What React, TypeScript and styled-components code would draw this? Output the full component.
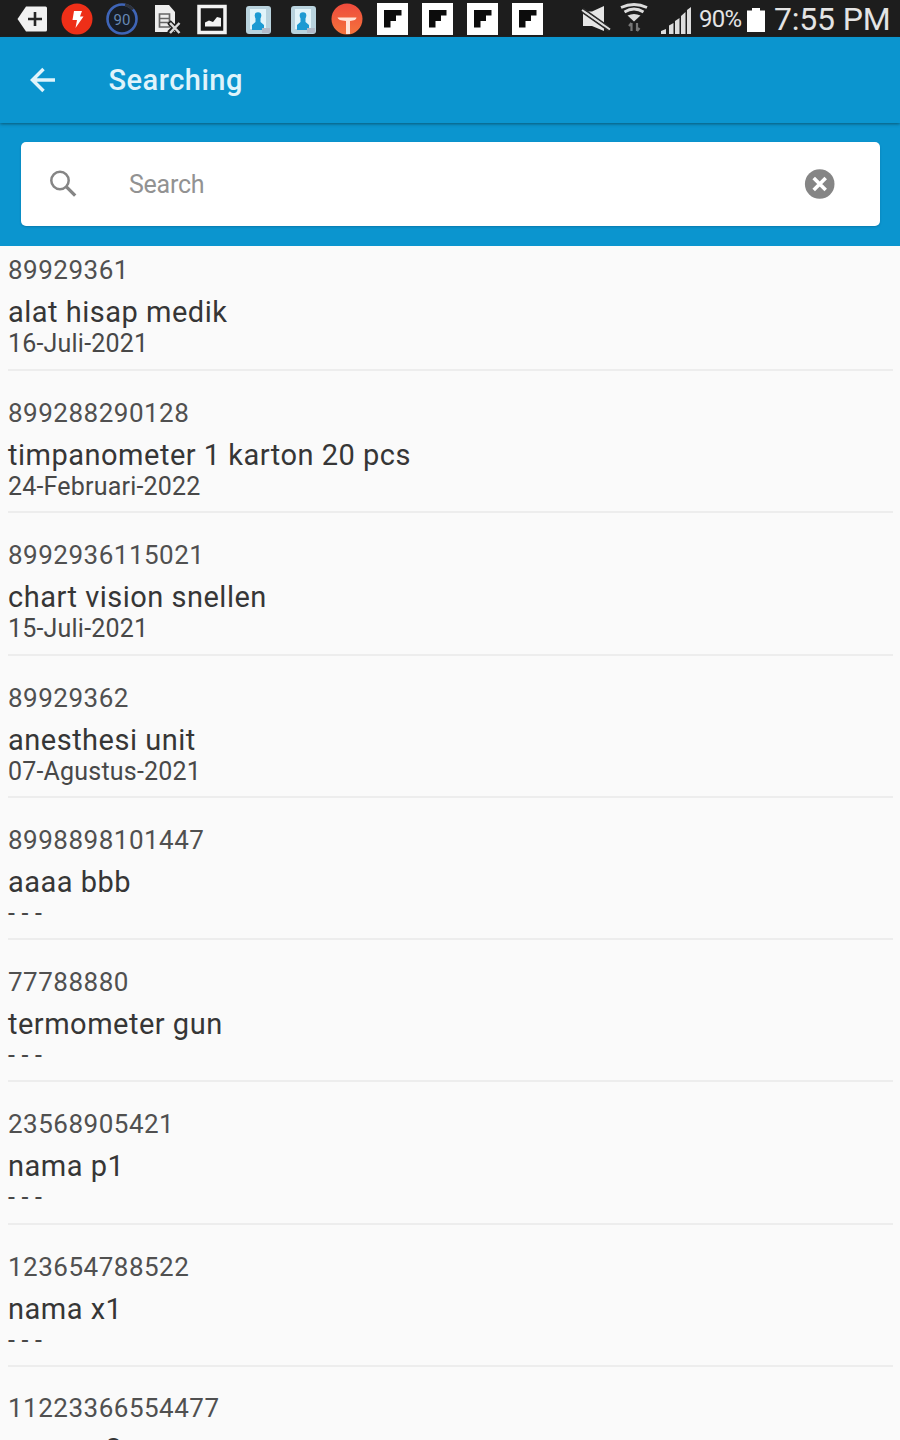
import React from "react";
import styled, { createGlobalStyle } from "styled-components";

const Global = createGlobalStyle`
  html, body { margin: 0; padding: 0; }
  body { background: #fafafa; font-family: Roboto, "Noto Sans", sans-serif; }
`;

const Screen = styled.div`
  width: 900px;
  height: 1440px;
  overflow: hidden;
  display: flex;
  flex-direction: column;
  background: #fafafa;
`;

const StatusBar = styled.div`
  flex: none;
  height: 37px;
  background: #1d1d1d;
  display: flex;
  align-items: flex-start;
  padding-left: 10px;
  color: #e4e4e4;
`;

const Icon = styled.svg<{ $w?: number }>`
  display: block;
  flex: none;
  width: ${(p) => p.$w ?? 45}px;
  height: 37px;
`;

const StatusRight = styled.div`
  flex: 1;
  display: flex;
  padding-left: 30px;
`;

const StatusText = styled.span<{ $size: number; $width: number; $spacing: number }>`
  width: ${(p) => p.$width}px;
  font-size: ${(p) => p.$size}px;
  letter-spacing: ${(p) => p.$spacing}px;
  line-height: 39px;
  white-space: nowrap;
`;

const AppBar = styled.header`
  flex: none;
  position: relative;
  height: 86px;
  display: flex;
  align-items: center;
  background: #0b95cf;
  box-shadow: 0 1px 3px rgba(10, 70, 90, 0.75);
`;

const BackArrow = styled.svg`
  display: block;
  width: 32px;
  height: 32px;
  margin-left: 27px;
`;

const Title = styled.h1`
  margin: 0 0 0 49.5px;
  font-size: 29px;
  line-height: 34px;
  font-weight: 500;
  letter-spacing: 0.5px;
  color: #e0f4fb;
`;

const SearchArea = styled.div`
  flex: none;
  height: 123px;
  box-sizing: border-box;
  padding: 19px 20px 20px 21px;
  background: #0b95cf;
`;

const SearchBox = styled.div`
  height: 84px;
  box-sizing: border-box;
  display: flex;
  align-items: center;
  padding: 0 43px 0 26px;
  background: #fff;
  border-radius: 5px;
  box-shadow: 0 1px 2px rgba(0, 60, 100, 0.3);
`;

const SearchIcon = styled.svg`
  display: block;
  width: 32px;
  height: 32px;
  overflow: visible;
`;

const Placeholder = styled.span`
  flex: 1;
  margin-left: 50px;
  padding-top: 2px;
  font-size: 25px;
  line-height: 30px;
  letter-spacing: -0.25px;
  color: #929292;
`;

const List = styled.ul`
  list-style: none;
  margin: 0;
  padding: 0 7px 0 8px;
`;

const Code = styled.div`
  height: 32px;
  line-height: 30px;
  font-size: 26px;
  letter-spacing: 0.5px;
  color: #505050;
`;

const Name = styled.div`
  height: 36px;
  line-height: 50px;
  font-size: 29px;
  letter-spacing: 0.5px;
  color: #363636;
  white-space: nowrap;
`;

const DateLine = styled.div`
  line-height: 41px;
  font-size: 25px;
  letter-spacing: 0.2px;
  color: #484848;
`;

const Item = styled.li`
  height: 142.3px;
  box-sizing: border-box;
  padding-top: 27px;
  border-bottom: 2px solid #ededed;

  &:first-child {
    height: 125px;
    padding-top: 9px;
  }

  &:last-child {
    padding-top: 26px;
  }

  &:last-child ${Name} {
    line-height: 48px;
  }
`;

const items = [
  ["89929361", "alat hisap medik", "16-Juli-2021"],
  ["899288290128", "timpanometer 1 karton 20 pcs", "24-Februari-2022"],
  ["8992936115021", "chart vision snellen", "15-Juli-2021"],
  ["89929362", "anesthesi unit", "07-Agustus-2021"],
  ["8998898101447", "aaaa bbb", "- - -"],
  ["77788880", "termometer gun", "- - -"],
  ["23568905421", "nama p1", "- - -"],
  ["123654788522", "nama x1", "- - -"],
  ["11223366554477", "nama x2", ""],
];

const Contact = () => (
  <Icon viewBox="0 0 45 37">
    <rect x="11" y="6" width="25" height="28" rx="3" fill="#b9d3de" />
    <rect x="15" y="9" width="16" height="20" fill="#e2f4fa" />
    <circle cx="23" cy="15.5" r="3.3" fill="#1d9ad2" />
    <path d="M20.500 17h5v5l3.500 3v5h-12v-5l3.500-3z" fill="#1d9ad2" />
    <path d="M27 28h8v5h-8z" fill="#b3bac8" />
  </Icon>
);

const Flip = () => (
  <Icon viewBox="0 0 45 37">
    <rect x="7" y="3" width="31" height="32" fill="#fff" />
    <path d="M14 10h17.500v5.500H26V21h-5.500v6.500H14z" fill="#0c0c0c" />
  </Icon>
);

export default function App() {
  return (
    <Screen>
      <Global />
      <StatusBar>
        <Icon viewBox="0 0 45 37">
          <path d="M7.500 19 16 6.500h19.500q1.500 0 1.500 1.500v22q0 1.500-1.500 1.500H16z" fill="#f1f1f1" />
          <path d="M18 19h14M25 12v14" stroke="#262626" strokeWidth="2.600" />
        </Icon>
        <Icon viewBox="0 0 45 37">
          <circle cx="22" cy="19" r="15.500" fill="#ee2f18" />
          <path d="M19 11h8l-2 5.500h3.500L20.500 28l1.500-8h-4.500z" fill="#fff" />
        </Icon>
        <Icon viewBox="0 0 45 37">
          <circle cx="22" cy="19" r="14.500" fill="#171d26" stroke="#3f65b8" strokeWidth="2.600" />
          <path d="M25 4.900a14.500 14.500 0 0 1 8 4.500" fill="none" stroke="#30333a" strokeWidth="2.800" />
          <text x="22" y="24.500" textAnchor="middle" fontFamily="Roboto" fontSize="15" fill="#6688b4">90</text>
        </Icon>
        <Icon viewBox="0 0 45 37">
          <path d="M10 5h14l6 7v20H10z" fill="#eeeeee" />
          <path d="M14.500 14h10v13h-10zM15 18.500h10M15 22.500h10" stroke="#666" strokeWidth="1.700" fill="none" />
          <path d="m24 22 11 11M35 22 24 33" stroke="#1d1d1d" strokeWidth="5" />
          <path d="m25 23 9.500 10M34.500 23 25 33" stroke="#d8d8d8" strokeWidth="2.500" />
        </Icon>
        <Icon viewBox="0 0 45 37">
          <rect x="9" y="6.500" width="26" height="26" fill="#1b1b1b" stroke="#f3f3f3" strokeWidth="3.500" />
          <path d="M15 26.500v-4l4-2 4 1.500 4-5 4 1v8.500z" fill="#f3f3f3" />
        </Icon>
        <Contact />
        <Contact />
        <Icon viewBox="0 0 45 37">
          <defs>
            <linearGradient id="badge" x1="0" y1="0" x2="0" y2="1">
              <stop offset="0" stopColor="#ee4a3c" />
              <stop offset="1" stopColor="#f5743c" />
            </linearGradient>
          </defs>
          <circle cx="22" cy="19" r="15.500" fill="url(#badge)" />
          <path d="M12.500 17.500h19q0 3-6.500 3.500v13h-4V21q-8-.5-8.500-3.500z" fill="#ffe4d8" />
        </Icon>
        <Flip />
        <Flip />
        <Flip />
        <Flip />
        <StatusRight>
          <Icon $w={40} viewBox="0 0 40 37">
            <path d="M3 11.500h9l12-5.500v25l-12-5H3z" fill="#e6e6e6" />
            <path d="m2 12 27 19M3 8.500l26 18.500" stroke="#2a2a2a" strokeWidth="1.800" />
            <path d="m2 10 28 19.500" stroke="#dedede" strokeWidth="2" />
          </Icon>
          <Icon $w={38} viewBox="0 0 38 37">
            <g fill="none" stroke="#dcdcdc" strokeWidth="2.800">
              <path d="M1 7.500q13-6 26 0" />
              <path d="M4.500 12q9.500-6 19 0" />
            </g>
            <path d="m7.500 15.500 6.500 6 6.500-6q-6.500-3-13 0z" fill="#dcdcdc" />
            <path d="M11.500 31v-8m-2.500 3 2.500-3M17 23v8m2.500-3L17 31" stroke="#777" strokeWidth="2.200" fill="none" />
          </Icon>
          <Icon $w={41} viewBox="0 0 41 37">
            <path d="M3 34v-3l5-2v5zM11 34v-8.500l4.500-2.500V34zM17 34V21l4.500-3v16zM23 34V16l4.500-4v22zM29 34V10l4-3v27z" fill="#dddddd" />
          </Icon>
          <StatusText $size={24} $width={48} $spacing={-0.8}>90%</StatusText>
          <Icon $w={27} viewBox="0 0 27 37">
            <path d="M0 10.500h5V8h8v2.500h5V32H0z" fill="#fff" />
          </Icon>
          <StatusText $size={32} $width={120} $spacing={-0.2}>7:55 PM</StatusText>
        </StatusRight>
      </StatusBar>
      <AppBar>
        <BackArrow viewBox="0 0 32 32">
          <path d="M28 16H5.500M16.500 5 5.500 16l11 11" fill="none" stroke="#e0f4fb" strokeWidth="3.500" />
        </BackArrow>
        <Title>Searching</Title>
      </AppBar>
      <SearchArea>
        <SearchBox>
          <SearchIcon viewBox="0 0 32 32">
            <circle cx="13" cy="12.500" r="8.700" fill="none" stroke="#858585" strokeWidth="2.500" />
            <path d="m19.200 18.700 9 9" stroke="#858585" strokeWidth="3.300" />
          </SearchIcon>
          <Placeholder>Search</Placeholder>
          <SearchIcon viewBox="0 0 32 32">
            <circle cx="14.700" cy="16" r="14.800" fill="#858585" />
            <path d="m8.700 10 12 12M20.700 10l-12 12" stroke="#fff" strokeWidth="3.600" />
          </SearchIcon>
        </SearchBox>
      </SearchArea>
      <List>
        {items.map(([code, name, date]) => (
          <Item key={code}>
            <Code>{code}</Code>
            <Name>{name}</Name>
            {date && <DateLine>{date}</DateLine>}
          </Item>
        ))}
      </List>
    </Screen>
  );
}
